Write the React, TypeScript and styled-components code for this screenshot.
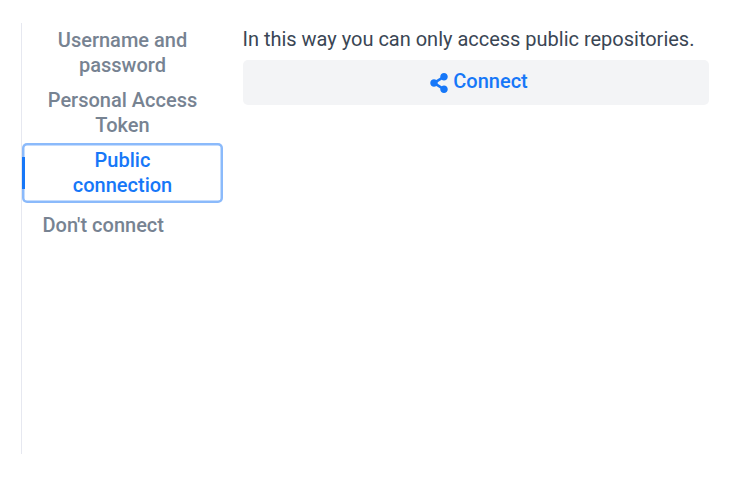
import React from "react";
import styled, { createGlobalStyle } from "styled-components";
import { FaShareAlt } from "react-icons/fa";

const GlobalStyle = createGlobalStyle`
  *, *::before, *::after { box-sizing: border-box; }
  body { margin: 0; background: #fff; font-family: Roboto, sans-serif; }
`;

const Page = styled.main`
  display: flex;
  align-items: flex-start;
  height: 478px;
  padding: 23px 26px 23px 21px;
  font-size: 20px;
  line-height: 25px;
`;

const TabList = styled.div`
  display: flex;
  flex-direction: column;
  width: 202px;
  height: 431px;
  border-left: 1px solid #e6e8f0;
`;

const Tab = styled.button<{ $active?: boolean; $single?: boolean }>`
  position: relative;
  display: flex;
  align-items: center;
  justify-content: ${(p) => (p.$single ? "flex-start" : "center")};
  height: ${(p) => (p.$single ? 45 : 60)}px;
  padding: 0 20px 0 ${(p) => (p.$single ? 20.5 : 20)}px;
  border: 0;
  border-radius: 5px;
  box-shadow: ${(p) => (p.$active ? "inset 0 0 0 2.5px #8bbafb" : "none")};
  background: transparent;
  color: ${(p) => (p.$active ? "#1677f8" : "#778392")};
  font: 500 20px/25px Roboto, sans-serif;
  text-align: center;
  white-space: pre-line;
`;

const ActiveMarker = styled.span`
  position: absolute;
  left: 0;
  top: 14px;
  width: 3px;
  height: 32px;
  background: #1677f8;
`;

const Panel = styled.section`
  flex: 1;
  margin-left: 20px;
`;

const Message = styled.p`
  margin: 4px 0 8px -0.5px;
  color: #3a4654;
  letter-spacing: -0.01px;
  white-space: nowrap;
`;

const ConnectButton = styled.button`
  display: flex;
  align-items: center;
  justify-content: center;
  gap: 5.5px;
  width: 100%;
  height: 45px;
  padding: 0 0 2px 5.5px;
  border: 0;
  border-radius: 5px;
  background: #f3f4f6;
  color: #1677f8;
  font: 500 20px/25px Roboto, sans-serif;
`;

const ShareIcon = styled(FaShareAlt)`
  width: 18px;
  height: 20px;
  margin-top: 3px;
`;

export default function App() {
  return (
    <>
      <GlobalStyle />
      <Page>
        <TabList>
          <Tab>{"Username and\npassword"}</Tab>
          <Tab>{"Personal Access\nToken"}</Tab>
          <Tab $active><ActiveMarker />{"Public\nconnection"}</Tab>
          <Tab $single>Don't connect</Tab>
        </TabList>
        <Panel>
          <Message>In this way you can only access public repositories.</Message>
          <ConnectButton><ShareIcon />Connect</ConnectButton>
        </Panel>
      </Page>
    </>
  );
}
